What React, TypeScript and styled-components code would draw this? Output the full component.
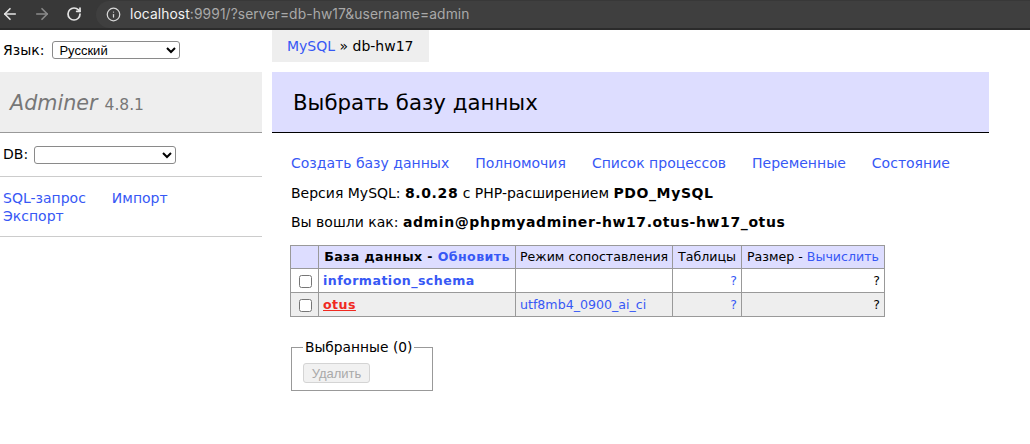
import React from "react";
import styled, { createGlobalStyle } from "styled-components";
import { ArrowLeft, ArrowRight, RotateCw, Info } from "lucide-react";

const Global = createGlobalStyle`
  html, body { margin: 0; padding: 0; background: #fff; }
  body {
    font-family: "DejaVu Sans", Verdana, sans-serif;
    font-size: 14px;
    line-height: 1.25;
    color: #000;
  }
  * { box-sizing: border-box; }
`;

const LINK = "#3758f5";

/* ---------- browser chrome ---------- */
const BrowserBar = styled.div`
  height: 30px;
  background: #383838;
  border-bottom: 2px solid #2b2b2b;
  display: flex;
  align-items: stretch;
`;

const NavIcons = styled.div`
  display: flex;
  align-items: center;
  gap: 14px;
  padding-left: 1px;
  padding-right: 13px;
`;

const NavIcon = styled.span<{ $dim?: boolean }>`
  width: 18px;
  height: 18px;
  display: flex;
  align-items: center;
  justify-content: center;
  color: ${(p) => (p.$dim ? "#8a8a8a" : "#e3e3e3")};
`;

const UrlPill = styled.div`
  flex: 1;
  display: flex;
  align-items: center;
  gap: 9px;
  margin-top: 1px;
  padding-left: 10px;
  background: #3f3f3f;
  border-radius: 14px 0 0 14px;
`;

const InfoMark = styled.span`
  display: flex;
  color: #d8d8d8;
`;

const UrlText = styled.div`
  font-family: Inter, "Liberation Sans", sans-serif;
  font-size: 13.8px;
  letter-spacing: 0.1px;
  white-space: nowrap;
  color: #a9a9a9;
`;

const Host = styled.span`
  color: #f2f2f2;
`;

/* ---------- page ---------- */
const Page = styled.div`
  display: flex;
  align-items: flex-start;
`;

const Sidebar = styled.aside`
  width: 262px;
  flex-shrink: 0;
`;

const LangRow = styled.div`
  height: 42px;
  padding: 11px 0 0 3px;
  display: flex;
  align-items: flex-start;
  gap: 8px;
  line-height: 18px;
`;

const Select = styled.select<{ $w: number }>`
  width: ${(p) => p.$w}px;
  height: 18px;
  font-family: "Liberation Sans", Arial, sans-serif;
  font-size: 13px;
  padding: 0 0 0 2px;
  margin: 0;
  background: #fff;
  color: #000;
  border: 1px solid #8a8a8a;
  border-radius: 3px;
`;

const Logo = styled.h1`
  margin: 0;
  height: 61px;
  padding: 18px 10px 0;
  line-height: 26px;
  background: #eee;
  border-bottom: 1px solid #999;
  font-weight: normal;
  color: #777;
  font-size: 20.7px;
`;

const LogoName = styled.span`
  font-style: italic;
`;

const Version = styled.span`
  font-size: 15.5px;
  margin-left: 7px;
`;

const MenuDb = styled.div`
  height: 44px;
  padding: 0 3px;
  display: flex;
  align-items: center;
  gap: 6px;
  border-bottom: 1px solid #ccc;
`;

const MenuLinks = styled.div`
  height: 60px;
  padding: 12px 40px 11px 3px;
  display: flex;
  flex-wrap: wrap;
  column-gap: 26px;
  align-content: flex-start;
  line-height: 18px;
  border-bottom: 1px solid #ccc;
`;

const Link = styled.a<{ $bold?: boolean; $active?: boolean }>`
  color: ${(p) => (p.$active ? "#f0291f" : LINK)};
  text-decoration: ${(p) => (p.$active ? "underline" : "none")};
  font-weight: ${(p) => (p.$bold ? "bold" : "normal")};
  white-space: nowrap;
  cursor: pointer;
`;

const Strong = styled.b`
  letter-spacing: 0.6px;
`;

const Content = styled.main`
  margin-left: 10px;
  width: 717px;
`;

const Breadcrumb = styled.div`
  width: fit-content;
  height: 32px;
  line-height: 32px;
  padding: 0 15px;
  background: #eee;
  white-space: nowrap;
`;

const Heading = styled.h2`
  margin: 10px 0 0;
  height: 61px;
  padding: 2px 21px 0;
  line-height: 58px;
  background: #ddf;
  border-bottom: 1px solid #000;
  font-size: 21.3px;
  font-weight: normal;
  color: #000;
`;

const Body = styled.div`
  padding-left: 18px;
`;

const TopLinks = styled.div`
  margin-top: 21px;
  display: flex;
  gap: 26px;
  line-height: 18px;
  padding-left: 1px;
`;

const Para = styled.p<{ $mt: number }>`
  margin: ${(p) => p.$mt}px 0 0;
  line-height: 18px;
  padding-left: 1px;
`;

const DbTable = styled.table`
  margin-top: 14px;
  border-collapse: collapse;
  table-layout: fixed;
  width: 594px;
  font-size: 12.6px;
`;

const Col = styled.col<{ $w: number }>`
  width: ${(p) => p.$w}px;
`;

const HeadCell = styled.th<{ $bold?: boolean }>`
  background: #ddf;
  border: 1px solid #999;
  padding: 0 4px;
  line-height: 22px;
  text-align: center;
  white-space: nowrap;
  font-weight: ${(p) => (p.$bold ? "bold" : "normal")};
  letter-spacing: ${(p) => (p.$bold ? "0.4px" : "0")};
`;

const Row = styled.tr<{ $odd?: boolean }>`
  background: ${(p) => (p.$odd ? "#eee" : "#fff")};
`;

const Cell = styled.td<{ $right?: boolean; $bold?: boolean }>`
  border: 1px solid #999;
  padding: 0 4px;
  line-height: 23px;
  white-space: nowrap;
  text-align: ${(p) => (p.$right ? "right" : "left")};
  font-weight: ${(p) => (p.$bold ? "bold" : "normal")};
  letter-spacing: ${(p) => (p.$bold ? "0.45px" : "0")};
`;

const CheckCell = styled.td`
  border: 1px solid #999;
  padding: 0 0 0 5px;
  line-height: 23px;
`;

const Check = styled.input`
  width: 13px;
  height: 13px;
  margin: 0 0 0 3px;
  vertical-align: middle;
`;

const Fieldset = styled.fieldset`
  width: 142px;
  margin: 21px 0 0 1px;
  padding: 0 11px 7px;
  border: 1px solid #999;
  min-inline-size: 0;
`;

const Legend = styled.legend`
  padding: 0 2px;
  line-height: 18px;
  font-size: 13.8px;
`;

const Button = styled.button`
  display: block;
  margin-top: 7px;
  width: 67px;
  height: 20px;
  padding: 0;
  font-family: "Liberation Sans", Arial, sans-serif;
  font-size: 13px;
  color: #a9a9a9;
  background: #f1f1f1;
  border: 1px solid #d4d4d4;
  border-radius: 3px;
`;

export default function App() {
  return (
    <>
      <Global />
      <BrowserBar>
        <NavIcons>
          <NavIcon>
            <ArrowLeft size={18} strokeWidth={2.2} />
          </NavIcon>
          <NavIcon $dim>
            <ArrowRight size={18} strokeWidth={2.2} />
          </NavIcon>
          <NavIcon>
            <RotateCw size={16} strokeWidth={2.6} />
          </NavIcon>
        </NavIcons>
        <UrlPill>
          <InfoMark>
            <Info size={15} strokeWidth={2} />
          </InfoMark>
          <UrlText>
            <Host>localhost</Host>:9991/?server=db-hw17&amp;username=admin
          </UrlText>
        </UrlPill>
      </BrowserBar>

      <Page>
        <Sidebar>
          <LangRow>
            <span>Язык:</span>
            <Select $w={128} defaultValue="ru">
              <option value="ru">Русский</option>
            </Select>
          </LangRow>
          <Logo>
            <LogoName>Adminer</LogoName>
            <Version>4.8.1</Version>
          </Logo>
          <MenuDb>
            <span>DB:</span>
            <Select $w={142} defaultValue="">
              <option value=""></option>
            </Select>
          </MenuDb>
          <MenuLinks>
            <Link>SQL-запрос</Link>
            <Link>Импорт</Link>
            <Link>Экспорт</Link>
          </MenuLinks>
        </Sidebar>

        <Content>
          <Breadcrumb>
            <Link>MySQL</Link> » db-hw17
          </Breadcrumb>
          <Heading>Выбрать базу данных</Heading>
          <Body>
            <TopLinks>
              <Link>Создать базу данных</Link>
              <Link>Полномочия</Link>
              <Link>Список процессов</Link>
              <Link>Переменные</Link>
              <Link>Состояние</Link>
            </TopLinks>
            <Para $mt={12}>
              Версия MySQL: <Strong>8.0.28</Strong> с PHP-расширением{" "}
              <Strong>PDO_MySQL</Strong>
            </Para>
            <Para $mt={11}>
              Вы вошли как:{" "}
              <Strong>admin@phpmyadminer-hw17.otus-hw17_otus</Strong>
            </Para>
            <DbTable>
              <colgroup>
                <Col $w={28} />
                <Col $w={197} />
                <Col $w={157} />
                <Col $w={69} />
                <Col $w={143} />
              </colgroup>
              <thead>
                <tr>
                  <HeadCell />
                  <HeadCell $bold>
                    База данных - <Link $bold>Обновить</Link>
                  </HeadCell>
                  <HeadCell>Режим сопоставления</HeadCell>
                  <HeadCell>Таблицы</HeadCell>
                  <HeadCell>
                    Размер - <Link>Вычислить</Link>
                  </HeadCell>
                </tr>
              </thead>
              <tbody>
                <Row>
                  <CheckCell>
                    <Check type="checkbox" />
                  </CheckCell>
                  <Cell $bold>
                    <Link $bold>information_schema</Link>
                  </Cell>
                  <Cell />
                  <Cell $right>
                    <Link>?</Link>
                  </Cell>
                  <Cell $right>?</Cell>
                </Row>
                <Row $odd>
                  <CheckCell>
                    <Check type="checkbox" />
                  </CheckCell>
                  <Cell $bold>
                    <Link $bold $active>
                      otus
                    </Link>
                  </Cell>
                  <Cell>
                    <Link>utf8mb4_0900_ai_ci</Link>
                  </Cell>
                  <Cell $right>
                    <Link>?</Link>
                  </Cell>
                  <Cell $right>?</Cell>
                </Row>
              </tbody>
            </DbTable>
            <Fieldset>
              <Legend>Выбранные (0)</Legend>
              <Button disabled>Удалить</Button>
            </Fieldset>
          </Body>
        </Content>
      </Page>
    </>
  );
}
